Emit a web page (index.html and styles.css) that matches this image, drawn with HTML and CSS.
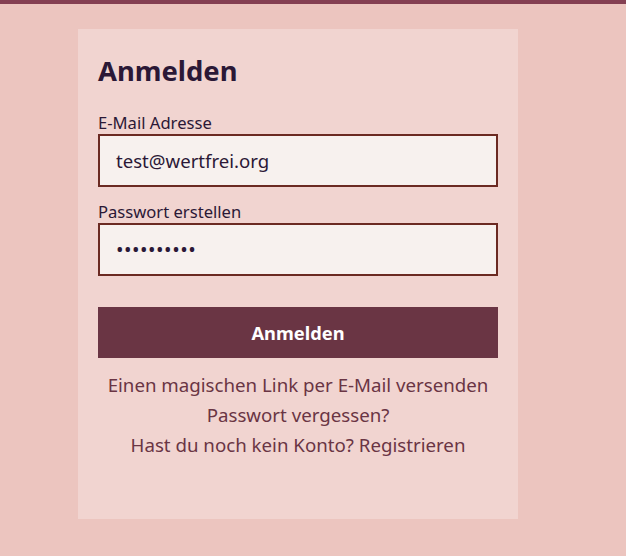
FILE: index.html
```html
<!DOCTYPE html>
<html lang="de">
<head>
<meta charset="utf-8">
<link rel="stylesheet" href="styles.css">
</head>
<body>
<div class="topbar"></div>
<main class="page">
  <section class="card">
    <h1 class="title">Anmelden</h1>
    <label class="label">E-Mail Adresse</label>
    <div class="input">test@wertfrei.org</div>
    <label class="label">Passwort erstellen</label>
    <div class="input dots">••••••••••</div>
    <button class="btn">Anmelden</button>
    <nav class="links">
      <a>Einen magischen Link per E-Mail versenden</a>
      <a>Passwort vergessen?</a>
      <a>Hast du noch kein Konto? Registrieren</a>
    </nav>
  </section>
</main>
</body>
</html>
```

FILE: styles.css
```css
* { box-sizing: border-box; }
html, body { margin: 0; padding: 0; }
body {
  background: #ecc5bf;
  font-family: "Noto Sans", "Open Sans", sans-serif;
  color: #2b1836;
  height: 556px;
  overflow: hidden;
}
.topbar { height: 4px; background: #843f52; }
.page { padding: 25px 0 0 78px; }
.card {
  width: 440px;
  height: 490px;
  background: #f1d4d0;
  padding: 20px 20px;
  display: flex;
  flex-direction: column;
}
.title {
  margin: 0;
  font-size: 27.4px;
  font-weight: 700;
  line-height: 44px;
  margin-bottom: 20px;
  color: #2b1836;
}
.label {
  font-size: 16.6px;
  line-height: 19px;
  margin-bottom: 2px;
  color: #2b1836;
}
.input {
  height: 53px;
  border: 2px solid #6b2a22;
  background: #f7f1ee;
  font-size: 18.6px;
  line-height: 49px;
  padding-left: 16px;
  color: #2b1836;
  margin-bottom: 15px;
}
.dots { letter-spacing: 0.5px; font-size: 20px; }
.btn {
  margin-top: 16px;
  height: 51px;
  border: 0;
  background: #6a3544;
  color: #ffffff;
  font-family: inherit;
  font-size: 18.3px;
  font-weight: 700;
}
.links {
  display: flex;
  flex-direction: column;
  align-items: center;
  margin-top: 12px;
}
.links a {
  font-size: 18.7px;
  line-height: 30px;
  color: #6a3544;
}
```
